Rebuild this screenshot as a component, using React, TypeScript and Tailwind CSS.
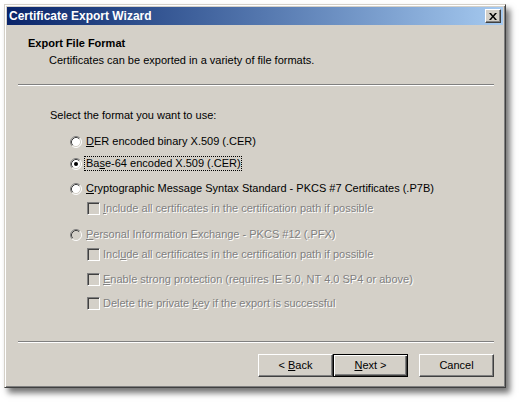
import React from 'react'

const FONT = { fontFamily: "'Liberation Sans', Arial, sans-serif" }

function Radio({ checked = false, disabled = false }: { checked?: boolean; disabled?: boolean }) {
  return (
    <svg width="12" height="12" viewBox="0 0 12 12" className="shrink-0">
      <circle cx="6" cy="6" r="5" fill={disabled ? '#d4d0c8' : '#ffffff'} />
      <path d="M2.11 9.89 A5.5 5.5 0 0 1 9.89 2.11" fill="none" stroke="#808080" strokeWidth="1" />
      <path d="M9.89 2.11 A5.5 5.5 0 0 1 2.11 9.89" fill="none" stroke="#ffffff" strokeWidth="1" />
      <path d="M2.82 9.18 A4.5 4.5 0 0 1 9.18 2.82" fill="none" stroke="#404040" strokeWidth="1" />
      <path d="M9.18 2.82 A4.5 4.5 0 0 1 2.82 9.18" fill="none" stroke="#d4d0c8" strokeWidth="1" />
      {checked && <circle cx="6" cy="6" r="2" fill="#000000" />}
    </svg>
  )
}

function Check() {
  return (
    <span className="block w-[13px] h-[13px] shrink-0 bg-[#d4d0c8] border border-t-[#808080] border-l-[#808080] border-b-white border-r-white shadow-[inset_1px_1px_0_#404040,inset_-1px_-1px_0_#d4d0c8]" />
  )
}

const dim = 'text-[#808080] [text-shadow:1px_1px_0_#ffffff]'

export default function App() {
  return (
    <div className="w-[521px] h-[404px] bg-white pt-[4px] pl-[4px] text-[11px] leading-[13px] text-black" style={FONT}>
      <div className="w-[502px] h-[384px] bg-[#d4d0c8] p-[2px] border border-t-[#d4d0c8] border-l-[#d4d0c8] border-b-[#404040] border-r-[#404040] shadow-[inset_1px_1px_0_#ffffff,inset_-1px_-1px_0_#808080,4px_5px_6px_rgba(0,0,0,0.55)] flex flex-col">
        {/* Title bar */}
        <div className="h-[18px] bg-linear-to-r from-[#0a246a] to-[#a6caf0] flex items-center justify-between pl-[2px] pr-[2px]">
          <span className="text-white font-bold text-[12px]">Certificate Export Wizard</span>
          <button className="w-[16px] h-[14px] bg-[#d4d0c8] flex items-center justify-center border border-t-white border-l-white border-b-[#404040] border-r-[#404040] shadow-[inset_-1px_-1px_0_#808080]">
            <svg width="8" height="7" viewBox="0 0 8 7">
              <path d="M0 0h2l2 2.5L6 0h2L5 3.5 8 7H6L4 4.5 2 7H0l3-3.5z" fill="#000" />
            </svg>
          </button>
        </div>

        {/* Header */}
        <div className="mt-[12px] pl-[21px] font-bold">Export File Format</div>
        <div className="mt-[4px] pl-[42px]">Certificates can be exported in a variety of file formats.</div>
        <div className="mt-[17px] ml-[11px] mr-[9px] h-[2px] border-t border-t-[#808080] border-b border-b-white" />

        {/* Body */}
        <div className="mt-[23px] pl-[43px]">Select the format you want to use:</div>

        <div className="mt-[13px] pl-[63px] flex items-center gap-[3px]">
          <Radio />
          <span className="pl-[1px]"><u>D</u>ER encoded binary X.509 (.CER)</span>
        </div>
        <div className="mt-[9px] pl-[63px] flex items-center gap-[3px]">
          <Radio checked />
          <span className="pl-[1px] outline-1 outline-dotted outline-black">Ba<u>s</u>e-64 encoded X.509 (.CER)</span>
        </div>
        <div className="mt-[12px] pl-[63px] flex items-center gap-[3px]">
          <Radio />
          <span className="pl-[1px]"><u>C</u>ryptographic Message Syntax Standard - PKCS #7 Certificates (.P7B)</span>
        </div>
        <div className="mt-[7px] pl-[80px] flex items-center gap-[3px]">
          <Check />
          <span className={dim}><u>I</u>nclude all certificates in the certification path if possible</span>
        </div>

        <div className="mt-[13px] pl-[63px] flex items-center gap-[3px]">
          <Radio disabled />
          <span className={`pl-[1px] ${dim}`}><u>P</u>ersonal Information Exchange - PKCS #12 (.PFX)</span>
        </div>
        <div className="mt-[7px] pl-[80px] flex items-center gap-[3px]">
          <Check />
          <span className={dim}>Incl<u>u</u>de all certificates in the certification path if possible</span>
        </div>
        <div className="mt-[12px] pl-[80px] flex items-center gap-[3px]">
          <Check />
          <span className={dim}><u>E</u>nable strong protection (requires IE 5.0, NT 4.0 SP4 or above)</span>
        </div>
        <div className="mt-[11px] pl-[80px] flex items-center gap-[3px]">
          <Check />
          <span className={dim}>Delete the private <u>k</u>ey if the export is successful</span>
        </div>

        {/* Footer */}
        <div className="mt-[31px] ml-[11px] mr-[9px] h-[2px] border-t border-t-[#808080] border-b border-b-white" />
        <div className="mt-[11px] mr-[9px] flex justify-end">
          <button className="w-[75px] h-[23px] bg-[#d4d0c8] border border-t-white border-l-white border-b-[#404040] border-r-[#404040] shadow-[inset_-1px_-1px_0_#808080]">
            &lt; <u>B</u>ack
          </button>
          <button className="w-[75px] h-[23px] bg-[#d4d0c8] border border-black shadow-[inset_1px_1px_0_#ffffff,inset_-1px_-1px_0_#404040,inset_-2px_-2px_0_#808080]">
            <u>N</u>ext &gt;
          </button>
          <button className="ml-[11px] w-[75px] h-[23px] bg-[#d4d0c8] border border-t-white border-l-white border-b-[#404040] border-r-[#404040] shadow-[inset_-1px_-1px_0_#808080]">
            Cancel
          </button>
        </div>
      </div>
    </div>
  )
}
